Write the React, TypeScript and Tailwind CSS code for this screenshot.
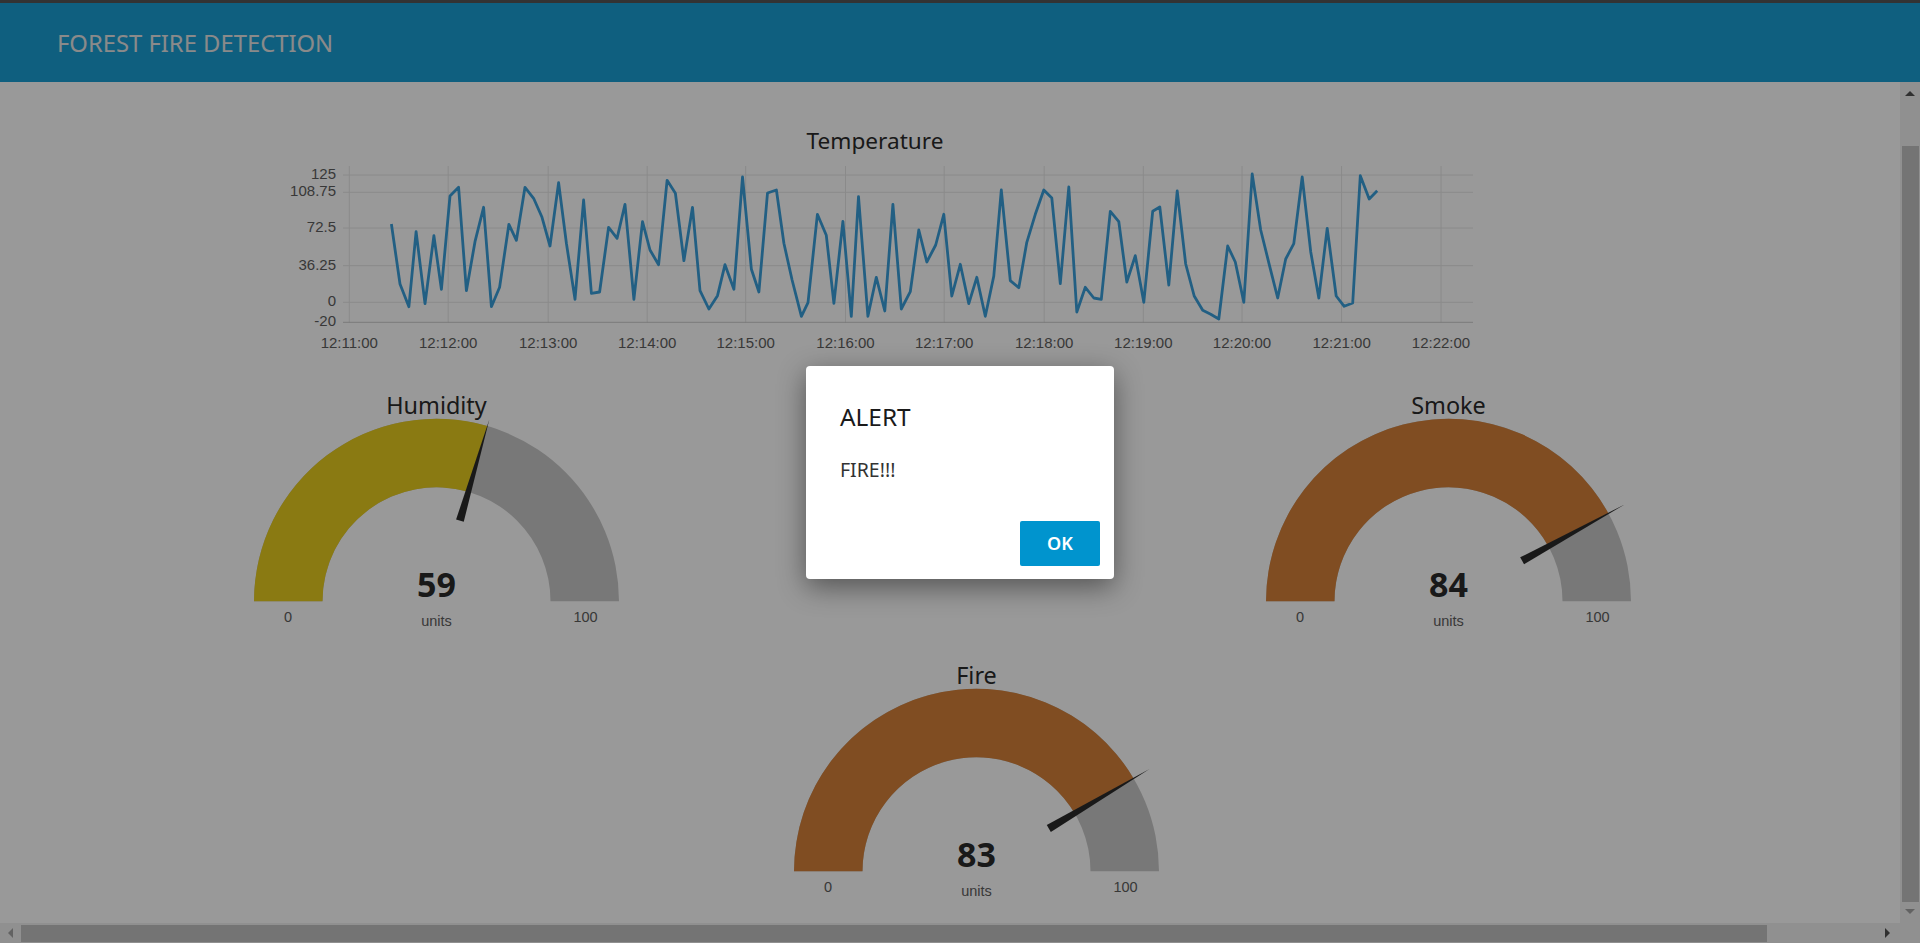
const SEGOE = "font-['Noto_Sans','Open_Sans',sans-serif]"

// line samples read off the chart, in page pixels
const TEMP_A: [number, number][] = [
  [368, 342], [392, 522], [417, 590], [437, 365], [462, 581], [487, 377], [508, 538], [532, 258], [556, 232],
  [578, 542], [602, 395], [626, 292], [648, 590], [671, 532], [697, 343], [718, 391], [742, 232], [766, 265],
  [789, 320], [812, 408], [836, 218], [858, 400], [882, 568], [906, 270], [928, 550], [951, 546], [976, 352],
  [1000, 385], [1022, 283], [1047, 568], [1071, 335], [1092, 420], [1116, 464], [1140, 211], [1163, 250],
  [1187, 452], [1211, 292], [1232, 542], [1257, 597], [1281, 557], [1302, 464], [1327, 538], [1351, 201],
  [1376, 478], [1397, 546], [1421, 249], [1446, 240], [1467, 400], [1490, 510], [1516, 619],
]
const TEMP_B: [number, number][] = [
  [18, 578], [39, 313], [59, 376], [76, 580], [96, 334], [115, 619], [131, 260], [152, 619], [171, 502],
  [190, 603], [208, 283], [227, 597], [247, 545], [266, 360], [284, 456], [304, 405], [322, 313], [340, 558],
  [359, 463], [378, 581], [396, 502], [415, 619], [434, 498], [451, 240], [471, 512], [490, 533], [508, 397],
  [527, 313], [546, 240], [564, 264], [583, 521], [602, 231], [620, 606], [639, 532], [658, 564], [675, 568],
  [695, 304], [714, 335], [732, 516], [751, 437], [770, 577], [790, 304], [806, 291], [826, 525], [845, 243],
  [864, 462], [883, 558], [902, 601], [920, 613], [938, 627], [958, 408], [975, 456], [994, 577], [1013, 192],
  [1032, 360], [1051, 463], [1070, 564], [1088, 447], [1106, 401], [1125, 201], [1144, 425], [1162, 564],
  [1181, 355], [1201, 558], [1219, 589], [1238, 579], [1255, 197], [1275, 267], [1293, 242],
]

const linePoints = [
  ...TEMP_A.map(([x, y]) => `${(260 + x / 2.8).toFixed(1)},${(110 + y / 3).toFixed(1)}`),
  ...TEMP_B.map(([x, y]) => `${(800 + x / 2.24).toFixed(1)},${(110 + y / 3).toFixed(1)}`),
].join(' ')

const yTicks = [
  { label: '125', y: 175 },
  { label: '108.75', y: 192.3 },
  { label: '72.5', y: 228 },
  { label: '36.25', y: 265.7 },
  { label: '0', y: 302.3 },
  { label: '-20', y: 322.3 },
]

const xTicks = [
  { label: '12:11:00', x: 349.3 },
  { label: '12:12:00', x: 448.2 },
  { label: '12:13:00', x: 548.2 },
  { label: '12:14:00', x: 647.2 },
  { label: '12:15:00', x: 745.7 },
  { label: '12:16:00', x: 845.5 },
  { label: '12:17:00', x: 944.2 },
  { label: '12:18:00', x: 1044.2 },
  { label: '12:19:00', x: 1143.3 },
  { label: '12:20:00', x: 1242 },
  { label: '12:21:00', x: 1341.6 },
  { label: '12:22:00', x: 1441 },
]

function TemperatureChart() {
  return (
    <svg viewBox="260 160 1230 200" className="block w-[1230px] h-[200px]">
      {xTicks.map((t) => (
        <line key={t.label} x1={t.x} x2={t.x} y1={166} y2={323} stroke="#e6e6e6" strokeWidth={1} />
      ))}
      {yTicks.map((t) => (
        <line
          key={t.label}
          x1={343}
          x2={1473}
          y1={t.y}
          y2={t.y}
          stroke={t.label === '-20' ? '#cccccc' : '#e6e6e6'}
          strokeWidth={1}
        />
      ))}
      <polyline points={linePoints} fill="none" stroke="#3a9fdb" strokeWidth={2.8} strokeLinejoin="round" />
      <g fill="#5e5e5e" className="font-['Liberation_Sans',Arial,sans-serif] text-[15px]">
        {yTicks.map((t) => (
          <text key={t.label} x={336} y={t.y + 4} textAnchor="end">
            {t.label}
          </text>
        ))}
        {xTicks.map((t) => (
          <text key={t.label} x={t.x} y={348} textAnchor="middle">
            {t.label}
          </text>
        ))}
      </g>
    </svg>
  )
}

const CX = 200.5
const CY = 211.3
const OUTER = 182.5
const INNER = 114

function polar(r: number, deg: number) {
  const a = (deg * Math.PI) / 180
  return [CX - r * Math.cos(a), CY - r * Math.sin(a)]
}

function arc(fromDeg: number, toDeg: number) {
  const [x1, y1] = polar(OUTER, fromDeg)
  const [x2, y2] = polar(OUTER, toDeg)
  const [x3, y3] = polar(INNER, toDeg)
  const [x4, y4] = polar(INNER, fromDeg)
  return `M${x1} ${y1}A${OUTER} ${OUTER} 0 0 1 ${x2} ${y2}L${x3} ${y3}A${INNER} ${INNER} 0 0 0 ${x4} ${y4}Z`
}

function Gauge({ title, value, color }: { title: string; value: number; color: string }) {
  const deg = (value / 100) * 180
  const rad = (deg * Math.PI) / 180
  const tipR = Math.min(201, 182 / Math.sin(rad))
  const [tx, ty] = polar(tipR, deg)
  const [bx, by] = polar(84, deg)
  const nx = Math.sin(rad) * 4
  const ny = -Math.cos(rad) * 4
  const needle = `${bx + nx},${by + ny} ${tx},${ty} ${bx - nx},${by - ny}`

  return (
    <svg viewBox="0 0 400 240" className="block w-[400px] h-[240px] shrink-0 overflow-visible">
      <path d={arc(0, 180)} fill="#c9c9c9" />
      <path d={arc(0, deg)} fill={color} />
      <polygon points={needle} fill="#2b2b2b" />
      <text x={CX} y={24} textAnchor="middle" fill="#2b2b2b" className={`${SEGOE} text-[23.4px]`}>
        {title}
      </text>
      <text x={CX} y={207} textAnchor="middle" fill="#2b2b2b" className={`${SEGOE} text-[34px] font-bold`}>
        {value}
      </text>
      <g fill="#5e5e5e" className="font-['Liberation_Sans',Arial,sans-serif] text-[14.5px]">
        <text x={CX} y={236} textAnchor="middle">
          units
        </text>
        <text x={52} y={232} textAnchor="middle">
          0
        </text>
        <text x={349.5} y={232} textAnchor="middle">
          100
        </text>
      </g>
    </svg>
  )
}

function ScrollbarV() {
  return (
    <div className="w-5 shrink-0 bg-[#f1f1f1] flex flex-col items-center">
      <div className="mt-[9px] w-0 h-0 border-x-[5px] border-x-transparent border-b-[5px] border-b-[#505050]" />
      <div className="mt-[50px] w-[17px] h-[756px] bg-[#c1c1c1]" />
      <div className="mt-[7px] w-0 h-0 border-x-[5px] border-x-transparent border-t-[5px] border-t-[#a3a3a3]" />
    </div>
  )
}

function ScrollbarH() {
  return (
    <div className="h-5 shrink-0 bg-[#f1f1f1] flex items-center">
      <div className="ml-[8px] w-0 h-0 border-y-[5px] border-y-transparent border-r-[5px] border-r-[#a3a3a3]" />
      <div className="ml-[8px] w-[1746px] h-[17px] bg-[#c1c1c1]" />
      <div className="ml-[118px] w-0 h-0 border-y-[5px] border-y-transparent border-l-[5px] border-l-[#505050]" />
    </div>
  )
}

export default function App() {
  return (
    <div className={`relative w-screen h-screen overflow-hidden bg-white flex flex-col ${SEGOE}`}>
      <header className="h-[82px] shrink-0 bg-[#1a9ed4] border-t-[3px] border-[#555555] flex items-center pl-[57px] pt-[2px]">
        <h1 className="text-[23.8px] font-normal text-[#e6e6e6]">FOREST FIRE DETECTION</h1>
      </header>

      <div className="flex flex-1 min-h-0">
        <main className="flex-1 min-w-0 pt-[44px]">
          <section className="ml-[260px] w-[1230px]">
            <h2 className="h-[30px] mb-[4px] text-center text-[22.6px] leading-[30px] font-normal text-[#2b2b2b]">
              Temperature
            </h2>
            <TemperatureChart />
          </section>
          <div className="mt-[30px] pl-[236px] flex gap-[612px]">
            <Gauge title="Humidity" value={59} color="#e6cb1e" />
            <Gauge title="Smoke" value={84} color="#d58039" />
          </div>
          <div className="mt-[30px] pl-[776px]">
            <Gauge title="Fire" value={83} color="#d58039" />
          </div>
        </main>
        <ScrollbarV />
      </div>
      <ScrollbarH />

      {/* alert dialog */}
      <div className="absolute inset-0 pt-px bg-black/40 flex items-center justify-center">
        <div className="w-[308px] h-[213px] bg-white rounded-[4px] shadow-[0_8px_28px_rgba(0,0,0,0.45)] flex flex-col pl-[34px] pr-[14px] pt-[35px] pb-[13px]">
          <h3 className="text-[24.4px] leading-[32px] font-normal text-[#1a1a1a]">ALERT</h3>
          <p className="mt-[24px] text-[19.5px] leading-[26px] font-normal text-[#333333]">FIRE!!!</p>
          <button className="mt-auto self-end w-[80px] h-[45px] bg-[#0094ce] rounded-[2px] text-white text-[18px] font-semibold">
            OK
          </button>
        </div>
      </div>
    </div>
  )
}
